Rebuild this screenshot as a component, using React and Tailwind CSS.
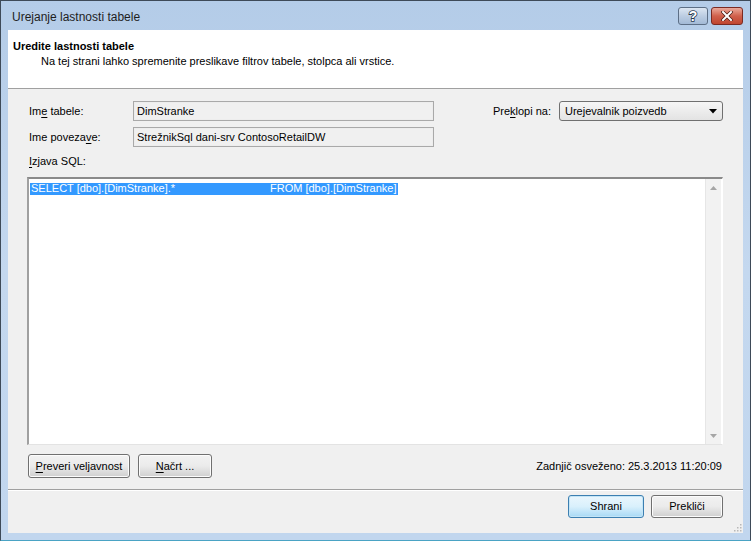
const U = ({ children }) => <span className="underline underline-offset-[2px]">{children}</span>;

const WinButton = ({ children, primary, className = '' }) => (
    <button
        className={`h-full rounded-[3px] border text-[11px] text-black leading-none ${primary
            ? 'border-[#3c7fb1] bg-gradient-to-b from-[#eaf6fd] via-[#d9f0fc] to-[#a7d9f5] shadow-[inset_0_0_0_1px_#c4e5f6]'
            : 'border-[#707070] bg-gradient-to-b from-[#f2f2f2] via-[#ebebeb] to-[#cfcfcf] shadow-[inset_0_0_0_1px_#fcfcfc]'
            } ${className}`}
    >
        {children}
    </button>
);

const ReadOnlyField = ({ value }) => (
    <div className="w-[301px] h-[20px] border border-[#a9a9a9] bg-[#f0f0f0] shadow-[inset_0_0_0_1px_#ededed] flex items-center pl-[3px] text-black">
        {value}
    </div>
);

export default function App() {
    return (
        <div
            className="w-[751px] h-[541px] flex flex-col border border-[#3e4a58] border-b-[#4aa3c4] bg-gradient-to-b from-[#b4cce8] via-[#c4d8ef] to-[#c1d6ee] text-[11px] text-black overflow-hidden"
            style={{ fontFamily: '"Liberation Sans", Arial, sans-serif' }}
        >
            {/* Title bar */}
            <div className="h-[29px] shrink-0 flex items-center pl-[11px] pr-[7px]">
                <span className="text-[12px] text-[#1e1e1e] mt-[2px]">Urejanje lastnosti tabele</span>
                <div className="ml-auto flex gap-[3px] mt-[1px]">
                    <div className="w-[30px] h-[18px] rounded-[3px] border border-[#5d6f86] bg-gradient-to-b from-[#dce6f2] via-[#bccde2] to-[#a3bad6] flex items-center justify-center">
                        <svg width="12" height="14" viewBox="0 0 12 14">
                            <text x="6" y="12" textAnchor="middle" fontSize="14" fontWeight="bold" fontFamily="Liberation Sans, Arial, sans-serif" fill="#ffffff" stroke="#2a3a50" strokeWidth="1.6" paintOrder="stroke">?</text>
                        </svg>
                    </div>
                    <div className="w-[32px] h-[18px] rounded-[3px] border border-[#7b2a22] bg-gradient-to-b from-[#e9a99b] via-[#d0604c] to-[#c0452f] flex items-center justify-center">
                        <svg width="12" height="10" viewBox="0 0 12 10">
                            <path d="M2 1 L10 9 M10 1 L2 9" stroke="#4b1a12" strokeWidth="3.4" strokeLinecap="square" />
                            <path d="M2 1 L10 9 M10 1 L2 9" stroke="#ffffff" strokeWidth="2" strokeLinecap="square" />
                        </svg>
                    </div>
                </div>
            </div>

            {/* Client area */}
            <div className="flex-1 mx-[7px] mb-[7px] bg-[#f0f0f0] flex flex-col">
                {/* Header */}
                <div className="h-[59px] shrink-0 bg-white border-b border-[#a0a0a0] pl-[5px] pt-[9px] leading-[15px]">
                    <div className="font-bold">Uredite lastnosti tabele</div>
                    <div className="ml-[28px]">Na tej strani lahko spremenite preslikave filtrov tabele, stolpca ali vrstice.</div>
                </div>

                {/* Body */}
                <div className="pl-[19px] pr-[20px] flex flex-col">
                    <div className="mt-[12px] h-[20px] pl-[2px] flex items-center">
                        <span className="w-[104px]">Im<U>e</U> tabele:</span>
                        <ReadOnlyField value="DimStranke" />
                        <span className="ml-auto">Pre<U>k</U>lopi na:</span>
                        <div className="ml-[8px] w-[164px] h-[20px] rounded-[3px] border border-[#707070] bg-gradient-to-b from-[#f6f6f6] to-[#e3e3e3] flex items-center pl-[5px] pr-[5px]">
                            <span>Urejevalnik poizvedb</span>
                            <svg className="ml-auto" width="8" height="5" viewBox="0 0 8 5">
                                <path d="M0 0 H8 L4 4.5 Z" fill="#000" />
                            </svg>
                        </div>
                    </div>

                    <div className="mt-[6px] h-[20px] pl-[2px] flex items-center">
                        <span className="w-[104px]">Ime poveza<U>v</U>e:</span>
                        <ReadOnlyField value="StrežnikSql dani-srv ContosoRetailDW" />
                    </div>

                    <div className="mt-[7px] pl-[2px] leading-[15px]">
                        <U>I</U>zjava SQL:
                    </div>

                    {/* SQL text box */}
                    <div className="mt-[8px] h-[268px] flex border-t-2 border-l-2 border-t-[#8a8a8a] border-l-[#a0a0a0] border-r border-b border-r-[#ffffff] border-b-[#e3e3e3] bg-white">
                        <div className="flex-1 pt-[1px] pl-[1px]">
                            <div className="inline-flex h-[12px] items-center bg-[#3399ff] text-white pr-[1px] leading-none">
                                <span className="w-[240px] pl-[1px]">SELECT [dbo].[DimStranke].*</span>
                                <span>FROM [dbo].[DimStranke]</span>
                            </div>
                        </div>
                        <div className="w-[17px] flex flex-col bg-[#f2f2f2] border-l border-[#e6e6e6] border-r border-r-white">
                            <div className="h-[17px] flex items-center justify-center">
                                <svg width="7" height="4" viewBox="0 0 7 4">
                                    <path d="M3.5 0 L7 4 H0 Z" fill="#a6a6a6" />
                                </svg>
                            </div>
                            <div className="flex-1" />
                            <div className="h-[17px] flex items-center justify-center">
                                <svg width="7" height="4" viewBox="0 0 7 4">
                                    <path d="M0 0 H7 L3.5 4 Z" fill="#a6a6a6" />
                                </svg>
                            </div>
                        </div>
                    </div>

                    {/* Validate row */}
                    <div className="mt-[9px] h-[24px] pl-[1px] flex items-center">
                        <WinButton className="w-[102px]"><U>P</U>reveri veljavnost</WinButton>
                        <WinButton className="w-[74px] ml-[8px]"><U>N</U>ačrt ...</WinButton>
                        <span className="ml-auto mr-[1px]">Zadnjič osveženo: 25.3.2013 11:20:09</span>
                    </div>
                </div>

                {/* Footer */}
                <div className="mt-[11px] border-t border-[#a0a0a0] shadow-[inset_0_1px_0_#ffffff] pt-[5px] pr-[20px] flex justify-end gap-[7px]">
                    <div className="h-[23px] flex gap-[7px]">
                        <WinButton primary className="w-[76px]">Shrani</WinButton>
                        <WinButton className="w-[72px]">Prekliči</WinButton>
                    </div>
                </div>

                <div className="flex-1 flex items-end justify-end pr-[1px] pb-[1px]">
                    <svg width="10" height="10" viewBox="0 0 10 10">
                        <g fill="#b8b8b8">
                            <rect x="8" y="2" width="1.5" height="1.5" />
                            <rect x="5" y="5" width="1.5" height="1.5" />
                            <rect x="8" y="5" width="1.5" height="1.5" />
                            <rect x="2" y="8" width="1.5" height="1.5" />
                            <rect x="5" y="8" width="1.5" height="1.5" />
                            <rect x="8" y="8" width="1.5" height="1.5" />
                        </g>
                    </svg>
                </div>
            </div>
        </div>
    );
}
